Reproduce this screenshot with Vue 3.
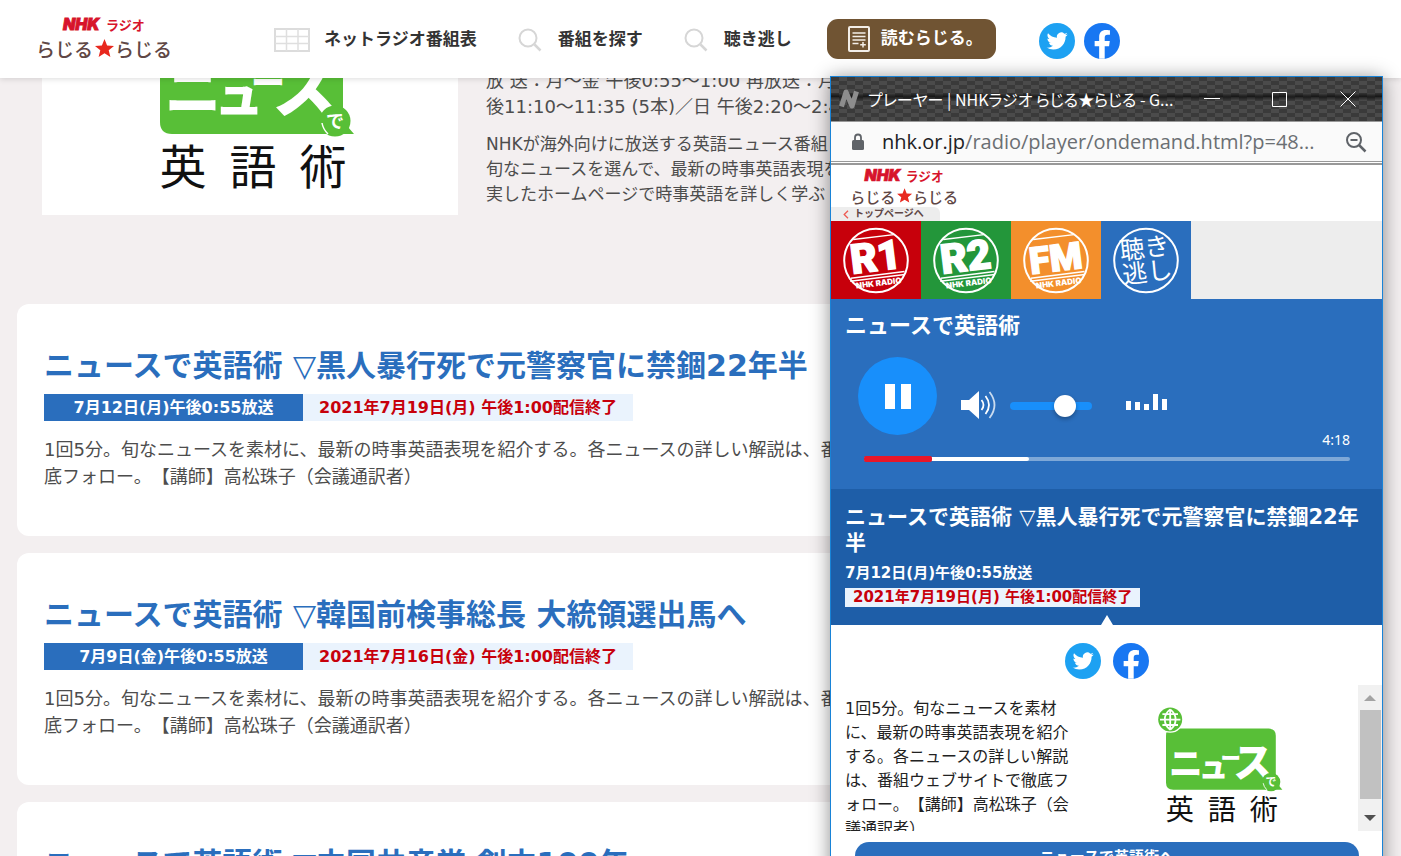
<script setup>
import { ref, h } from 'vue'

const volume = ref(73)
const played = 14
const loaded = 34

const heroSchedule = [
  '放 送：月～金 午後0:55～1:00 再放送：月',
  '後11:10～11:35 (5本)／日 午後2:20～2:45',
]
const heroText = [
  'NHKが海外向けに放送する英語ニュース番組',
  '旬なニュースを選んで、最新の時事英語表現を',
  '実したホームページで時事英語を詳しく学ぶ',
]
const summary =
  '1回5分。旬なニュースを素材に、最新の時事英語表現を紹介する。各ニュースの詳しい解説は、番組ウェブサイトで徹底フォロー。【講師】高松珠子（会議通訳者）'

const episodes = [
  { topic: '黒人暴行死で元警察官に禁錮22年半', aired: '7月12日(月)午後0:55放送', until: '2021年7月19日(月) 午後1:00配信終了' },
  { topic: '韓国前検事総長 大統領選出馬へ', aired: '7月9日(金)午後0:55放送', until: '2021年7月16日(金) 午後1:00配信終了' },
  { topic: '中国共産党 創立100年', aired: '7月8日(木)午後0:55放送', until: '2021年7月15日(木) 午後1:00配信終了' },
]

const stations = [
  { name: 'R1', tone: 'red' },
  { name: 'R2', tone: 'green' },
  { name: 'FM', tone: 'orange' },
]

const meter = [9, 8, 6, 16, 11]

const TwitterIcon = () =>
  h('svg', { viewBox: '0 0 36 36', width: 36, height: 36, 'aria-hidden': 'true' }, [
    h('circle', { cx: 18, cy: 18, r: 18, fill: '#1da1f2' }),
    h('path', {
      fill: '#fff',
      transform: 'translate(7.6 7.4) scale(.88)',
      d: 'M23.953 4.57a10 10 0 01-2.825.775 4.958 4.958 0 002.163-2.723c-.951.555-2.005.959-3.127 1.184a4.92 4.92 0 00-8.384 4.482C7.69 8.095 4.067 6.13 1.64 3.162a4.822 4.822 0 00-.666 2.475c0 1.71.87 3.213 2.188 4.096a4.904 4.904 0 01-2.228-.616v.06a4.923 4.923 0 003.946 4.827 4.996 4.996 0 01-2.212.085 4.936 4.936 0 004.604 3.417 9.867 9.867 0 01-6.102 2.105c-.39 0-.779-.023-1.17-.067a13.995 13.995 0 007.557 2.209c9.053 0 13.998-7.496 13.998-13.985 0-.21 0-.42-.015-.63A9.935 9.935 0 0024 4.59z',
    }),
  ])

const FacebookIcon = () =>
  h('svg', { viewBox: '0 0 24 24', width: 36, height: 36, 'aria-hidden': 'true' }, [
    h('circle', { cx: 12, cy: 12, r: 12, fill: '#1877f2' }),
    h('path', {
      fill: '#fff',
      d: 'M10.1 23.9v-8.4H7.1V12h3V9.4c0-3 1.8-4.7 4.6-4.7 1.300 0 2.600.2 2.600.2v3h-1.500c-1.500 0-2 .9-2 1.900V12h3.400l-.5 3.500h-2.900v8.400z',
    }),
  ])

const sans = { 'font-family': '"Noto Sans CJK JP", sans-serif' }
const star = 'M67.500 20l2.600 6.400 6.900.5-5.300 4.400 1.700 6.700-5.900-3.700-5.900 3.700 1.700-6.700-5.300-4.400 6.900-.5z'

const RadioLogo = ({ compact }) => {
  const [top, base] = compact ? [15, 42] : [12, 39]
  return h('svg', { viewBox: compact ? '0 0 136 46' : '0 0 136 42', overflow: 'visible', role: 'img', 'aria-label': 'NHKラジオ らじる★らじる' }, [
    h('text', { x: compact ? 17 : 26, y: top, fill: '#d7142b', stroke: '#d7142b', 'stroke-width': 0.9, 'font-family': 'Inter, sans-serif', 'font-weight': 900, 'font-style': 'italic', 'font-size': compact ? 20 : 16 }, 'NHK'),
    h('text', { x: 69, y: top, fill: '#d7142b', 'font-weight': 700, 'font-size': compact ? 16 : 13, ...sans }, 'ラジオ'),
    h('g', { fill: '#5f4745', 'font-weight': 500, 'font-size': 19, ...sans }, [
      h('text', { x: -1, y: base }, 'らじる'),
      h('text', { x: 78, y: base }, 'らじる'),
    ]),
    h('path', { fill: '#e8281e', transform: `translate(0 ${base - 38})`, d: star }),
  ])
}
RadioLogo.props = ['compact']

const ProgramLogo = () =>
  h('svg', { viewBox: '0 0 210 200', role: 'img', 'aria-label': 'ニュースで英語術' }, [
    h('path', { fill: '#58bf37', d: 'M27 36h159q12 0 12 12v90H27q-12 0-12-12V48q0-12 12-12z' }),
    h('circle', { cx: 22, cy: 21, r: 22, fill: '#fff' }),
    h('circle', { cx: 22, cy: 21, r: 20, fill: '#58bf37' }),
    h('path', { fill: 'none', stroke: '#fff', 'stroke-width': 3, d: 'M22 4v34M5 21h34M9 12h26M9 30h26M22 4c-12 9-12 25 0 34M22 4c12 9 12 25 0 34' }),
    h('g', { fill: '#fff', 'font-weight': 900, ...sans }, [
      h('text', { x: 20, y: 115, 'font-size': 56 }, 'ニ'),
      h('text', { x: 69, y: 117, 'font-size': 50 }, 'ュ'),
      h('text', { x: 106, y: 99, 'font-size': 34 }, 'ー'),
      h('text', { x: 127, y: 116, 'font-size': 66 }, 'ス'),
    ]),
    h('circle', { cx: 190, cy: 125, r: 15.5, fill: '#58bf37' }),
    h('path', { fill: 'none', stroke: '#fff', 'stroke-width': 1.5, d: 'M177 127q1 6 6 11' }),
    h('path', { fill: '#58bf37', d: 'M190 111a14 14 0 0 1 13 20l6 7h-20a14 14 0 0 1 1-27z' }),
    h('text', { x: 181, y: 132, 'font-size': 18, 'font-weight': 700, fill: '#fff', ...sans }, 'で'),
    h('g', { fill: '#111', 'font-size': 47, 'text-anchor': 'middle', ...sans }, [
      h('text', { x: 38, y: 188 }, '英'),
      h('text', { x: 108, y: 188 }, '語'),
      h('text', { x: 178, y: 188 }, '術'),
    ]),
  ])
</script>

<template>
  <div class="page">
    <header class="site-header">
      <a class="site-logo" href="#"><RadioLogo /></a>
      <nav class="site-nav">
        <a class="nav-link" href="#">
          <svg viewBox="0 0 36 24" width="36" height="24" aria-hidden="true">
            <rect x="1" y="1" width="34" height="22" fill="none" stroke="#dcdcdc" stroke-width="2" />
            <path d="M12.500 1v22M24 1v22M1 8.500h34M1 15.500h34" fill="none" stroke="#dfdfdf" stroke-width="1.500" />
          </svg>
          <span>ネットラジオ番組表</span>
        </a>
        <a v-for="label in ['番組を探す', '聴き逃し']" :key="label" class="nav-link search-link" href="#">
          <svg viewBox="0 0 24 24" width="24" height="24" aria-hidden="true">
            <circle cx="10" cy="10" r="8.500" fill="none" stroke="#d6d6d6" stroke-width="2" />
            <path d="M16.500 16.500l6 6" stroke="#d6d6d6" stroke-width="2.500" />
          </svg>
          <span>{{ label }}</span>
        </a>
      </nav>
      <a class="read-button" href="#">
        <svg viewBox="0 0 22 26" width="22" height="26" aria-hidden="true">
          <rect x="1" y="1" width="20" height="24" rx="1" fill="none" stroke="#f3eee8" stroke-width="2" />
          <path d="M4.500 7h13M4.500 10.500h13M4.500 14h13M4.500 17.500h6M15 16v5.500M12.200 18.700h5.600" stroke="#f3eee8" stroke-width="1.500" />
        </svg>
        <span>読むらじる。</span>
      </a>
      <div class="header-social">
        <a href="#" aria-label="Twitter"><TwitterIcon /></a>
        <a href="#" aria-label="Facebook"><FacebookIcon /></a>
      </div>
    </header>

    <main class="content">
      <section class="hero">
        <div class="hero-image"><ProgramLogo class="hero-logo" /></div>
        <div class="hero-copy">
          <p class="schedule"><span v-for="line in heroSchedule" :key="line">{{ line }}</span></p>
          <p class="about"><span v-for="line in heroText" :key="line">{{ line }}</span></p>
        </div>
      </section>

      <article v-for="ep in episodes" :key="ep.topic" class="episode">
        <h2>ニュースで英語術 ▽{{ ep.topic }}</h2>
        <div class="dates">
          <span class="aired">{{ ep.aired }}</span>
          <span class="until">{{ ep.until }}</span>
        </div>
        <p>{{ summary }}</p>
      </article>
    </main>

    <aside class="window" aria-label="プレーヤー">
      <div class="titlebar">
        <svg viewBox="0 0 22 20" width="22" height="20" aria-hidden="true">
          <path d="M3.500 17.500L8 3l6 14 4.500-14.500" fill="none" stroke="#8d8d8d" stroke-width="5" stroke-linejoin="round" />
        </svg>
        <span class="window-title">プレーヤー | NHKラジオ らじる★らじる - G...</span>
        <div class="window-buttons">
          <button type="button" aria-label="最小化"><svg viewBox="0 0 16 16" width="16" height="16"><path d="M0 7.500h16" /></svg></button>
          <button type="button" aria-label="最大化"><svg viewBox="0 0 16 16" width="16" height="16"><path d="M.5 1.500h14v14H.5z" /></svg></button>
          <button type="button" aria-label="閉じる"><svg viewBox="0 0 16 16" width="16" height="16"><path d="M.5 .5l15 15M15.500 .5l-15 15" /></svg></button>
        </div>
      </div>

      <div class="addressbar">
        <svg viewBox="0 0 14 18" width="14" height="18" aria-hidden="true">
          <rect x="1" y="7" width="12" height="10" rx="1.500" fill="#5f6368" />
          <path d="M4 8V4.500a3 3 0 0 1 6 0V8" fill="none" stroke="#5f6368" stroke-width="1.800" />
        </svg>
        <span class="url"><b>nhk.or.jp</b>/radio/player/ondemand.html?p=48...</span>
        <button type="button" aria-label="縮小">
          <svg viewBox="0 0 22 22" width="22" height="22">
            <circle cx="9" cy="9" r="7" fill="none" stroke="#5f6368" stroke-width="2" />
            <path d="M5.500 9h7" stroke="#5f6368" stroke-width="2" />
            <path d="M14 14l6.500 6.500" stroke="#5f6368" stroke-width="2.500" />
          </svg>
        </button>
      </div>

      <div class="player-head">
        <RadioLogo :compact="true" class="small-logo" />
        <a class="back-link" href="#">
          <svg viewBox="0 0 6 9" width="6" height="9" aria-hidden="true"><path d="M5 .7L1.200 4.500 5 8.300" fill="none" stroke="#ee5a52" stroke-width="1.300" /></svg>
          トップページへ
        </a>
      </div>

      <div class="stations">
        <button v-for="s in stations" :key="s.name" type="button" :class="s.tone" :aria-label="s.name">
          <svg viewBox="0 0 90 78" width="90" height="78">
            <circle cx="45" cy="39.500" r="31.800" fill="none" stroke="#fff" stroke-width="2" />
            <g transform="rotate(-7 45 40)">
              <path d="M25 16h41M18 54h54M17 57h55" stroke="#fff" stroke-width="1.500" />
              <text x="45" y="50" class="station-name" :class="{ wide: s.name === 'FM' }">{{ s.name }}</text>
              <text x="45" y="65" class="station-sub">NHK RADIO</text>
            </g>
          </svg>
        </button>
        <button type="button" class="blue" aria-label="聴き逃し">
          <svg viewBox="0 0 90 78" width="90" height="78">
            <circle cx="45" cy="39.500" r="31.800" fill="none" stroke="#fff" stroke-width="2" />
            <g transform="rotate(-7 45 40)" class="missed">
              <text x="20" y="36">聴き</text>
              <text x="20" y="60">逃し</text>
            </g>
          </svg>
        </button>
      </div>

      <section class="player">
        <h3>ニュースで英語術</h3>
        <div class="controls">
          <button type="button" class="pause" aria-label="一時停止"><i></i><i></i></button>
          <div class="volume">
            <svg viewBox="0 0 36 28" width="36" height="28" aria-hidden="true">
              <path d="M0 9h8L18 0v28L8 19H0z" fill="#fff" />
              <path d="M20.500 9q4 5 0 10M24.500 5q7 9 0 18" fill="none" stroke="#fff" stroke-width="1.800" />
              <path d="M28.500 1q10 13 0 26" fill="none" stroke="#c9dbef" stroke-width="1.800" />
            </svg>
            <input v-model="volume" type="range" min="0" max="100" aria-label="音量" />
            <span class="meter"><i v-for="(bar, i) in meter" :key="i" :style="{ height: bar + 'px' }"></i></span>
          </div>
        </div>
        <div class="time">4:18</div>
        <div class="progress" role="progressbar" aria-label="再生位置" :aria-valuenow="played">
          <div class="loaded" :style="{ width: loaded + '%' }"></div>
          <div class="played" :style="{ width: played + '%' }"></div>
        </div>
      </section>

      <section class="now">
        <h3>ニュースで英語術 ▽黒人暴行死で元警察官に禁錮22年半</h3>
        <p>7月12日(月)午後0:55放送</p>
        <p class="now-until">2021年7月19日(月) 午後1:00配信終了</p>
      </section>

      <div class="share">
        <a href="#" aria-label="Twitter"><TwitterIcon /></a>
        <a href="#" aria-label="Facebook"><FacebookIcon /></a>
      </div>

      <div class="detail">
        <p>{{ summary }}</p>
        <div class="detail-image"><ProgramLogo class="detail-logo" /></div>
        <div class="scrollbar" aria-hidden="true">
          <span class="arrow up"></span>
          <span class="thumb"></span>
          <span class="arrow down"></span>
        </div>
      </div>

      <a class="program-link" href="#">ニュースで英語術へ</a>
    </aside>
  </div>
</template>

<style>
body {
  margin: 0;
  overflow: hidden;
}
</style>

<style scoped>
* {
  box-sizing: border-box;
}
.page {
  position: relative;
  height: 100vh;
  overflow: hidden;
  background: #f3eff0;
  color: #4d4d4d;
  font-family: 'DejaVu Sans', 'Noto Sans CJK JP', sans-serif;
  text-spacing-trim: space-all;
}
h2,
h3,
p {
  margin: 0;
}
a {
  color: inherit;
  text-decoration: none;
}
button {
  padding: 0;
  border: 0;
  background: none;
  cursor: pointer;
}
svg {
  display: block;
  flex: none;
}

.site-header {
  position: relative;
  z-index: 1;
  display: flex;
  align-items: center;
  height: 78px;
  padding-left: 37px;
  background: #fff;
  box-shadow: 0 1px 6px rgba(0, 0, 0, 0.14);
  font-size: 17px;
  font-weight: 700;
  white-space: nowrap;
}
.site-logo svg {
  width: 136px;
  height: 42px;
}
.site-nav {
  display: flex;
  gap: 41px;
  margin: 2px 35px 0 101px;
  color: #333;
}
.nav-link {
  display: flex;
  align-items: center;
  gap: 14px;
}
.nav-link span,
.read-button span {
  padding-bottom: 5px;
}
.search-link {
  gap: 16px;
}
.read-button {
  display: flex;
  align-items: center;
  gap: 11px;
  height: 40px;
  padding: 0 13px 0 21px;
  border-radius: 11px;
  background: #705433;
  color: #fff;
}
.header-social {
  display: flex;
  gap: 9px;
  margin: 4px 0 0 43px;
}

.content {
  display: flex;
  flex-direction: column;
  gap: 17px;
  max-width: 1039px;
  padding-left: 17px;
}
.hero {
  display: flex;
  align-items: flex-end;
  gap: 28px;
  height: 137px;
  margin: 0 0 72px 25px;
  overflow: hidden;
}
.hero-image {
  flex: none;
  width: 416px;
  height: 234px;
  padding: 15px 0 0 103px;
  background: #fff;
}
.hero-logo {
  width: 210px;
  height: 200px;
}
.hero-copy {
  display: grid;
  gap: 12px;
  padding-bottom: 8px;
  white-space: nowrap;
}
.hero-copy span {
  display: block;
}
.schedule {
  font-size: 18px;
  line-height: 26px;
}
.about {
  font-size: 17px;
  line-height: 25px;
}

.episode {
  padding: 40px 27px 46px;
  border-radius: 12px;
  background: #fff;
}
.episode h2 {
  margin-bottom: 6px;
  color: #2a6ebd;
  font-size: 30px;
  line-height: 44px;
}
.dates {
  display: flex;
  margin-bottom: 15px;
  font-size: 16px;
  font-weight: 700;
  line-height: 27px;
}
.aired {
  width: 259px;
  background: #2a6ebd;
  color: #fff;
  text-align: center;
}
.until {
  padding: 0 16px;
  background: #eaf3fd;
  color: #c7000b;
}
.episode p {
  font-size: 18px;
  line-height: 27px;
}

.window {
  position: absolute;
  z-index: 2;
  top: 76px;
  right: 18px;
  bottom: -30px;
  width: 553px;
  border: 1px solid #1883d7;
  background: #fff;
  box-shadow: 0 2px 18px rgba(0, 0, 0, 0.45);
  overflow: hidden;
}
.titlebar {
  display: flex;
  align-items: center;
  gap: 8px;
  height: 45px;
  padding-left: 7px;
  border-bottom: 1px solid #999;
  background:
    linear-gradient(rgba(0, 0, 0, 0) 35%, rgba(0, 0, 0, 0.6) 44%, rgba(0, 0, 0, 0) 54%),
    repeating-conic-gradient(#4b4b4b 0 25%, #3a3a3a 0 50%) 0 0 / 16px 8px;
  color: #fff;
}
.window-title {
  flex: 1;
  font-family: 'Noto Sans CJK JP', sans-serif;
  font-size: 16px;
  font-feature-settings: 'palt';
  white-space: nowrap;
}
.window-buttons {
  display: flex;
  gap: 52px;
  padding-right: 26px;
}
.window-buttons svg {
  fill: none;
  stroke: #fff;
  stroke-width: 1;
}
.addressbar {
  display: flex;
  align-items: center;
  height: 40px;
  padding: 0 15px 0 20px;
  border-bottom: 1px solid #999;
  background: #fafafa;
}
.url {
  flex: 1;
  margin-left: 17px;
  color: #6b6f73;
  font-family: 'Open Sans', 'Noto Sans', sans-serif;
  font-size: 20px;
  white-space: nowrap;
}
.url b {
  color: #202124;
  font-weight: 400;
}
.player-head {
  display: flex;
  flex-direction: column;
  align-items: flex-start;
  justify-content: space-between;
  height: 58px;
  margin-top: 1px;
  padding-top: 4px;
  border-top: 2px solid #999;
}
.small-logo {
  width: 108px;
  height: 37px;
  margin-left: 20px;
}
.back-link {
  display: flex;
  align-items: center;
  gap: 5px;
  width: 109px;
  height: 14px;
  padding-left: 12px;
  border-radius: 0 6px 0 0;
  background: #ededed;
  color: #5f4745;
  font-size: 10px;
  font-weight: 700;
  line-height: 14px;
  white-space: nowrap;
}
.stations {
  display: flex;
  height: 78px;
  background: #ededed;
}
.red {
  background: #c7000b;
}
.green {
  background: #23963a;
}
.orange {
  background: #f38f2c;
}
.blue {
  background: #2a6ebd;
}
.station-name {
  fill: #fff;
  stroke: #fff;
  stroke-width: 1.5;
  font: 900 41px Roboto, sans-serif;
  text-anchor: middle;
}
.station-name.wide {
  font-size: 37px;
}
.station-sub {
  fill: #fff;
  font: 900 8px Inter, sans-serif;
  text-anchor: middle;
}
.missed text {
  fill: #fff;
  font: 400 25px 'Noto Sans CJK JP', sans-serif;
}

.player {
  height: 190px;
  padding: 11px 32px 0 14px;
  background: #2a6ebd;
  color: #fff;
}
.player h3 {
  font-size: 22px;
  line-height: 32px;
}
.controls {
  display: flex;
  align-items: center;
  height: 78px;
  margin: 15px 0 0 13px;
}
.pause {
  display: flex;
  align-items: center;
  justify-content: center;
  gap: 6px;
  width: 79px;
  height: 78px;
  border-radius: 50%;
  background: #188ffb;
}
.pause i {
  width: 10px;
  height: 25px;
  background: #fff;
}
.volume {
  display: flex;
  align-items: center;
  margin: 18px 0 0 24px;
}
.volume input {
  appearance: none;
  width: 82px;
  height: 8px;
  margin: 2px 0 0 13px;
  border-radius: 4px;
  background: #188ffb;
}
.volume input::-webkit-slider-thumb {
  appearance: none;
  width: 22px;
  height: 22px;
  border-radius: 50%;
  background: #fff;
  box-shadow: 0 2px 4px rgba(0, 0, 0, 0.3);
}
.meter {
  display: flex;
  align-items: flex-end;
  gap: 4px;
  height: 16px;
  margin: -6px 0 0 34px;
}
.meter i {
  width: 5px;
  background: #fff;
}
.time {
  margin-top: -4px;
  font-family: 'Noto Sans', sans-serif;
  font-size: 14px;
  line-height: 18px;
  text-align: right;
}
.progress {
  position: relative;
  height: 4px;
  margin: 8px 0 0 19px;
  border-radius: 2px;
  background: #7ea8d7;
}
.loaded,
.played {
  position: absolute;
  left: 0;
  border-radius: 2px;
}
.loaded {
  top: 0;
  height: 4px;
  background: #fff;
}
.played {
  top: -1px;
  height: 6px;
  background: #e81728;
}

.now {
  position: relative;
  height: 136px;
  padding: 15px 20px 0 14px;
  background: #1e5ea8;
  color: #fff;
  font-size: 15px;
  font-weight: 700;
}
.now::after {
  position: absolute;
  bottom: 0;
  left: 50%;
  margin-left: -6px;
  border: solid transparent;
  border-width: 0 6px 10px;
  border-bottom-color: #fff;
  content: '';
}
.now h3 {
  margin-bottom: 6px;
  font-size: 21px;
  line-height: 26px;
}
.now p {
  line-height: 22px;
}
.now .now-until {
  width: fit-content;
  margin-top: 4px;
  padding: 0 8px;
  background: #eaf3fd;
  color: #c7000b;
  line-height: 19px;
}
.share {
  display: flex;
  justify-content: center;
  gap: 12px;
  padding: 18px 0 6px;
}
.detail {
  display: flex;
  height: 146px;
  padding-left: 14px;
  overflow: hidden;
  color: #222;
}
.detail p {
  flex: none;
  width: 232px;
  padding-top: 12px;
  font-size: 16px;
  line-height: 24px;
}
.detail-image {
  flex: 1;
  padding: 22px 0 0 80px;
}
.detail-logo {
  width: 126px;
  height: 120px;
}
.scrollbar {
  display: flex;
  flex-direction: column;
  align-items: center;
  justify-content: space-between;
  width: 24px;
  padding: 10px 0;
  background: #f1f1f1;
}
.thumb {
  width: 21px;
  height: 89px;
  margin-bottom: 8px;
  background: #c1c1c1;
}
.arrow {
  border: solid transparent;
}
.up {
  border-width: 0 6px 6px;
  border-bottom-color: #a3a3a3;
}
.down {
  border-width: 6px 6px 0;
  border-top-color: #505050;
}
.program-link {
  display: block;
  height: 38px;
  margin: 11px 23px 0 24px;
  border-radius: 14px;
  background: #2a6ebd;
  color: #fff;
  font-size: 15px;
  font-weight: 700;
  line-height: 30px;
  text-align: center;
}
</style>
